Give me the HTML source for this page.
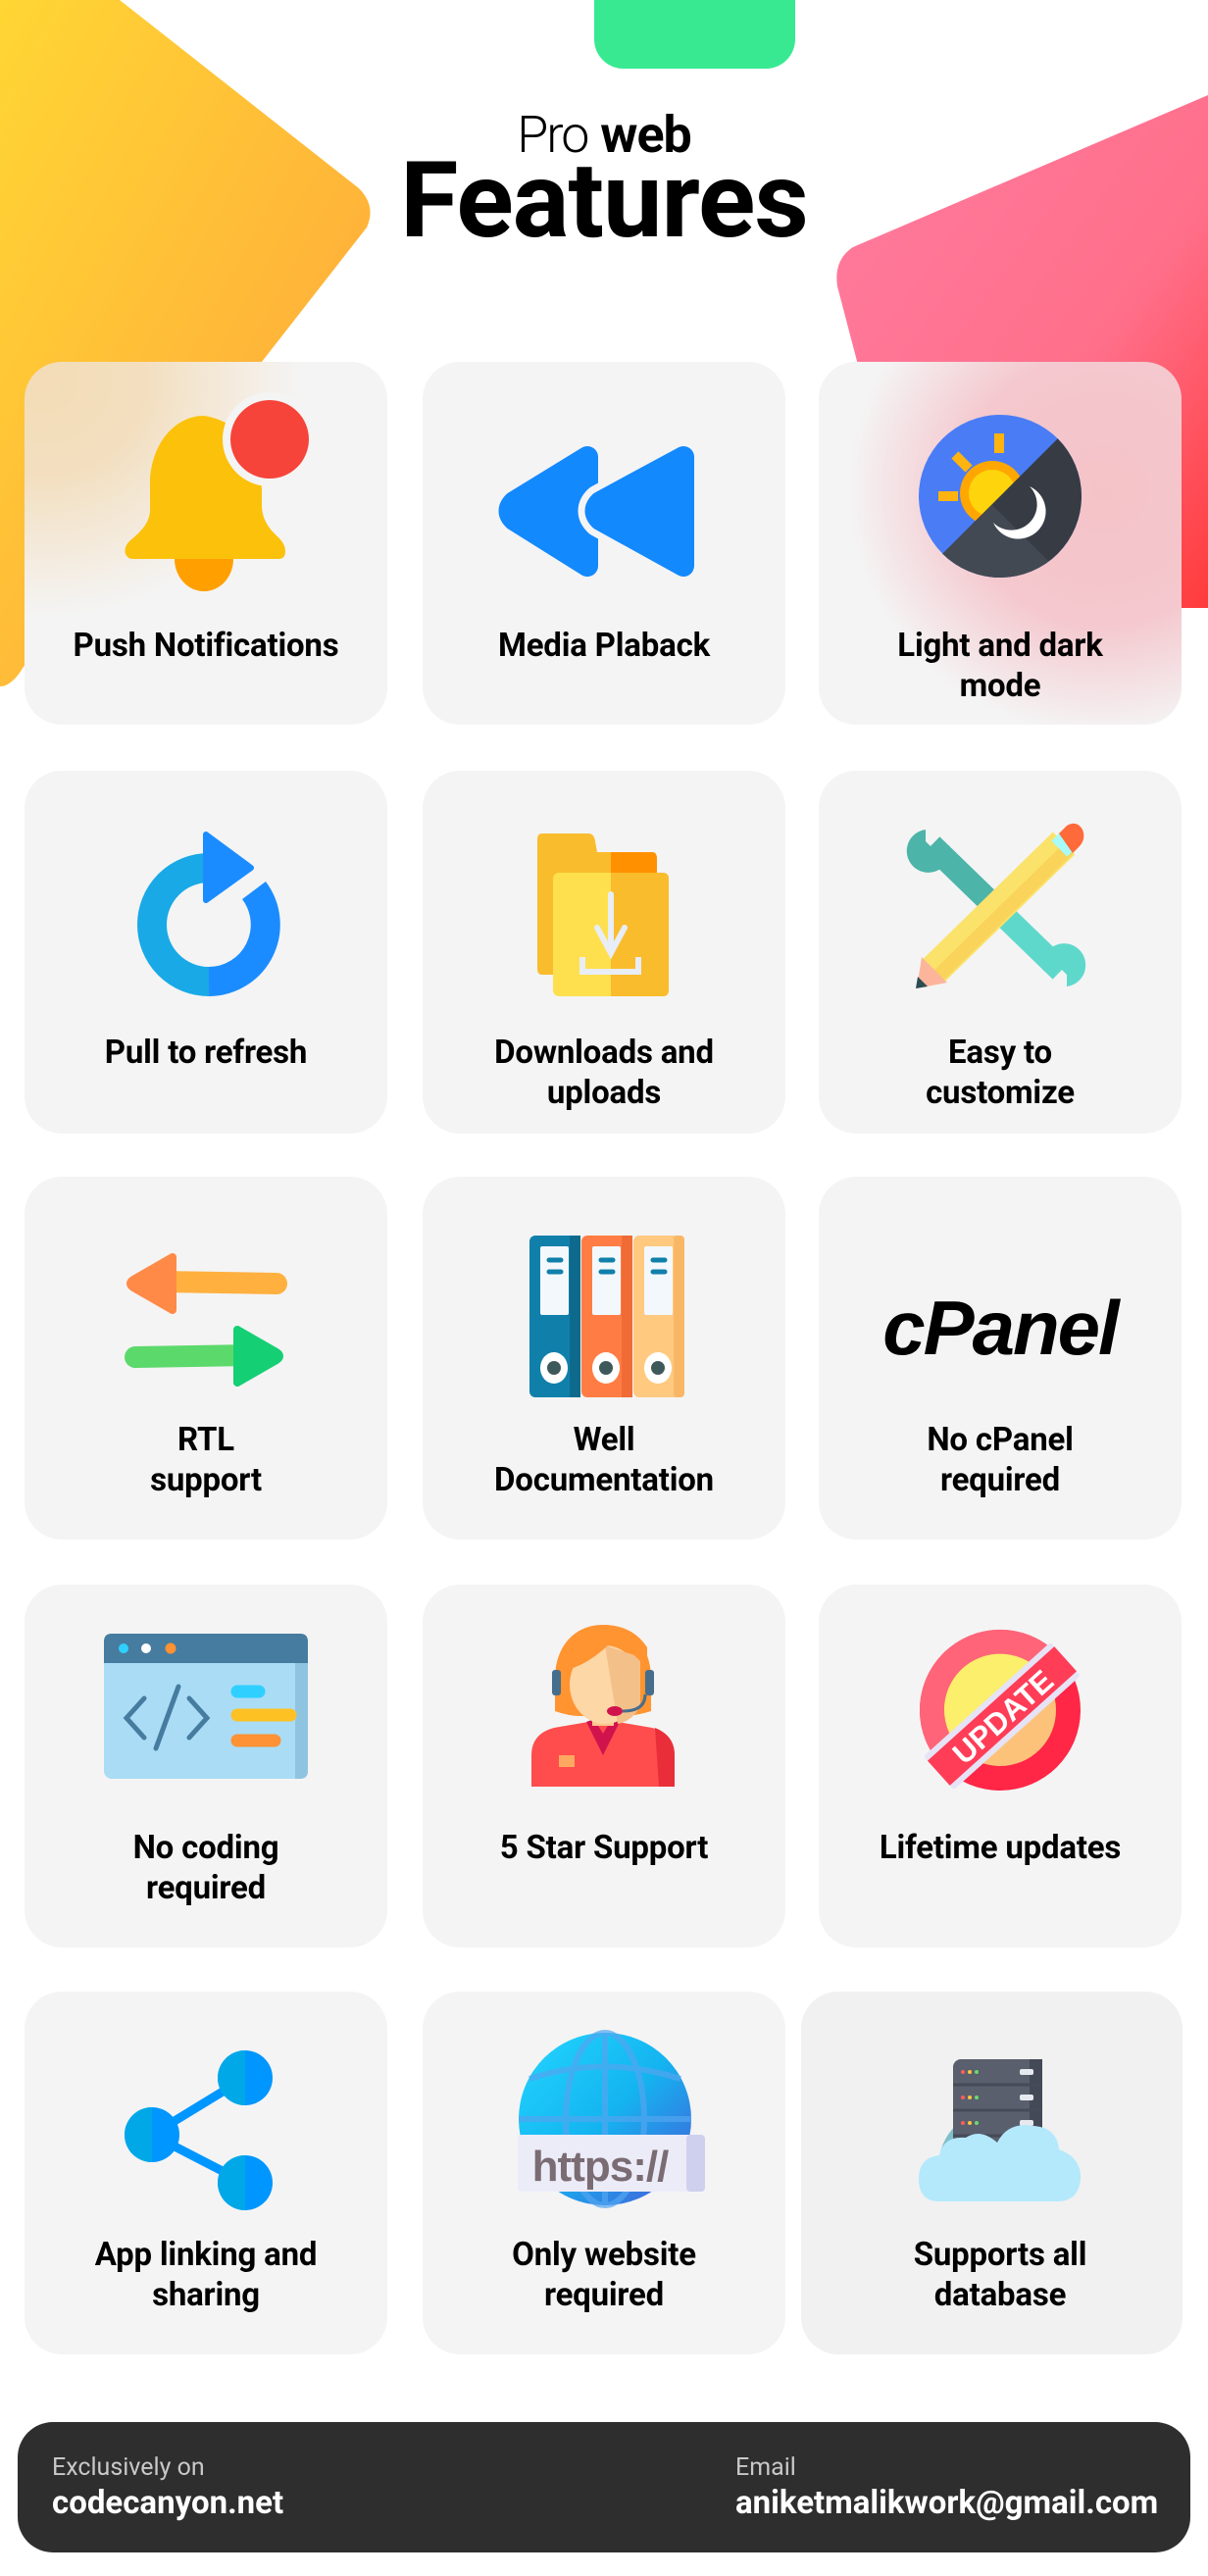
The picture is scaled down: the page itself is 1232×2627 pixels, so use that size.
<!DOCTYPE html>
<html><head><meta charset="utf-8">
<style>
html,body{margin:0;padding:0;}
body{width:1232px;height:2627px;position:relative;overflow:hidden;background:#fff;font-family:"Roboto","Liberation Sans",sans-serif;}
.abs{position:absolute;}
.card{position:absolute;width:370px;height:370px;border-radius:38px;background:#f4f4f4;}
.lbl{position:absolute;width:370px;text-align:center;font-weight:bold;font-size:33px;line-height:41px;color:#000;letter-spacing:-0.2px;}
svg{position:absolute;left:0;top:0;}
</style></head><body>
<svg width="1232" height="2627" viewBox="0 0 1232 2627">
<defs>
<linearGradient id="yg" x1="0" y1="0" x2="1" y2="1"><stop offset="0" stop-color="#ffd634"/><stop offset="1" stop-color="#ffa23c"/></linearGradient>
<linearGradient id="pg" x1="0" y1="0" x2="1" y2="1"><stop offset="0" stop-color="#ff7ca0"/><stop offset="0.6" stop-color="#ff6f8a"/><stop offset="1" stop-color="#ff3b3b"/></linearGradient>
</defs>
<path d="M0 0 L122 0 L366 192 Q384 210 374 232 L24 680 Q12 700 0 700 Z" fill="url(#yg)"/>
<path d="M1232 97 L870 252 Q850 265 854 292 L940 620 L1232 620 Z" fill="url(#pg)"/>
<rect x="606" y="-40" width="205" height="110" rx="30" fill="#38e991"/>
</svg>

<div class="abs" style="left:0;width:1232px;top:108px;text-align:center;font-size:52px;line-height:60px;color:#000;"><span style="font-weight:300;letter-spacing:-2px;">Pro</span> <span style="font-weight:bold;letter-spacing:-1px;">web</span></div>
<div class="abs" style="left:0;width:1232px;top:140px;text-align:center;font-size:108px;line-height:130px;font-weight:bold;color:#000;letter-spacing:-1px;">Features</div>

<!-- cards -->
<div class="card" style="left:25px;top:369px;background:radial-gradient(ellipse 260px 240px at 20px 20px,#f3dcb6 0%,#f3dfc0 40%,rgba(244,244,244,0) 100%),#f4f4f4;"></div>
<div class="card" style="left:431px;top:369px;"></div>
<div class="card" style="left:835px;top:369px;background:radial-gradient(ellipse 260px 250px at 290px 130px,#f4c3c8 0%,#f4c8ce 55%,rgba(244,244,244,0) 100%),#f4f4f4;"></div>

<div class="card" style="left:25px;top:786px;"></div>
<div class="card" style="left:431px;top:786px;"></div>
<div class="card" style="left:835px;top:786px;"></div>

<div class="card" style="left:25px;top:1200px;"></div>
<div class="card" style="left:431px;top:1200px;"></div>
<div class="card" style="left:835px;top:1200px;"></div>

<div class="card" style="left:25px;top:1616px;"></div>
<div class="card" style="left:431px;top:1616px;"></div>
<div class="card" style="left:835px;top:1616px;"></div>

<div class="card" style="left:25px;top:2031px;"></div>
<div class="card" style="left:431px;top:2031px;"></div>
<div class="card" style="left:817px;top:2031px;width:389px;background:#f1f1f1;"></div>

<!-- icons -->
<svg width="1232" height="2627" viewBox="0 0 1232 2627">
<defs>
<linearGradient id="gl" x1="0" y1="0" x2="1" y2="1"><stop offset="0" stop-color="#22d6ff"/><stop offset="0.5" stop-color="#14b4f0"/><stop offset="1" stop-color="#4a55d6"/></linearGradient>
<clipPath id="ldc"><circle cx="1020" cy="506" r="83"/></clipPath>
<clipPath id="upc"><circle cx="1020" cy="1744" r="82"/></clipPath>
</defs>
<!-- bell -->
<path d="M208 424 C180 424 155 450 153 490 L153 520 C153 535 140 545 132 552 Q126 558 128 565 Q130 570 136 570 L284 570 Q291 570 291 562 Q291 555 284 548 C275 540 267 530 267 515 L267 500 C267 470 250 430 208 424 Z" fill="#fcc10a"/>
<path d="M178 570 A30 33 0 0 0 238 570 Z" fill="#ffa000"/>
<circle cx="275" cy="448" r="48" fill="#f4f4f4"/>
<circle cx="275" cy="448" r="40" fill="#f6443a"/>
<!-- rewind -->
<path d="M599 466 L524 512 Q515 521 524 530 L599 577 Z" fill="#1389fe" stroke="#1389fe" stroke-width="22" stroke-linejoin="round"/>
<path d="M697 466 L612 512 Q603 521 612 530 L697 577 Z" fill="#f4f4f4" stroke="#f4f4f4" stroke-width="36" stroke-linejoin="round"/>
<path d="M697 466 L612 512 Q603 521 612 530 L697 577 Z" fill="#1389fe" stroke="#1389fe" stroke-width="22" stroke-linejoin="round"/>
<!-- light/dark -->
<g clip-path="url(#ldc)">
<rect x="930" y="420" width="180" height="180" fill="#4a7cf6"/>
<rect x="1014" y="442" width="10" height="20" fill="#ffb30f"/>
<rect x="957" y="501" width="20" height="10" fill="#ffb30f"/>
<rect x="976" y="461" width="10" height="20" fill="#ffb30f" transform="rotate(-45 981 471)"/>
<circle cx="1012" cy="503" r="33" fill="#ffa700"/>
<circle cx="1012" cy="503" r="24" fill="#fed40c"/>
<path d="M1081 445 L1110 445 L1110 620 L940 620 L959 567 Z" fill="#363b44"/><path d="M1012 515 L959 567 L940 620 L1110 620 L1066 569 Z" fill="#434953"/></g>
<path d="M1050 496 A28 28 0 1 1 1013 533 A24 24 0 0 0 1050 496 Z" fill="#fff"/>
<!-- refresh -->
<path d="M213 885 A58 58 0 0 0 213 1001" fill="none" stroke="#19a9e6" stroke-width="30"/>
<path d="M213 1001 A58 58 0 0 0 259 908" fill="none" stroke="#1a8cff" stroke-width="30"/>
<path d="M210 851 L256 885 L210 918 Z" fill="#1a8cff" stroke="#1a8cff" stroke-width="6" stroke-linejoin="round"/>
<!-- folder -->
<path d="M553 850 L600 850 Q606 850 607 858 L609 869 L665 869 Q670 869 670 876 L670 990 Q670 994 665 994 L553 994 Q548 994 548 988 L548 856 Q548 850 553 850 Z" fill="#f9bc2c"/>
<path d="M623 869 L665 869 Q670 869 670 876 L670 890 L623 890 Z" fill="#ff9100"/>
<rect x="564" y="890" width="118" height="126" rx="6" fill="#fee04e"/>
<path d="M623 890 L676 890 Q682 890 682 896 L682 1010 Q682 1016 676 1016 L623 1016 Z" fill="#f9bc2c"/>
<path d="M623 912 L623 972 M609 946 L623 972 L637 946" stroke="#e8edf6" stroke-width="6" fill="none" stroke-linecap="round"/>
<path d="M594 976 L594 991 L651 991 L651 976" stroke="#e8edf6" stroke-width="6" fill="none"/>
<!-- tools -->
<path d="M950 862 L1082 990" stroke="#5fd8cc" stroke-width="24"/>
<path d="M950 862 L1016 926" stroke="#4db4a9" stroke-width="24"/>
<path d="M944 846 A22 22 0 1 0 968 862 L956 870 L944 858 Z" fill="#4db4a9"/>
<path d="M1088 1006 A22 22 0 1 0 1064 990 L1076 982 L1088 994 Z" fill="#5fd8cc"/>
<path d="M1085 860 L952 990" stroke="#fbe26a" stroke-width="32"/>
<path d="M1090 865 L957 995" stroke="#f9d35a" stroke-width="14"/>
<path d="M1078 852 L1094 868" stroke="#a9fbf7" stroke-width="16"/>
<path d="M1080 850 L1088 842 Q1098 836 1104 846 Q1108 856 1100 864 L1094 870 Z" fill="#ff6a3a"/>
<path d="M940 976 L966 1002 L935 1008 Z" fill="#fcb59b"/>
<path d="M936 996 L946 1006 L934 1008 Z" fill="#2d4b52"/>
<!-- RTL arrows -->
<path d="M165 1307 L282 1309" stroke="#ffb03f" stroke-width="22" stroke-linecap="round"/>
<path d="M176 1282 L136 1305 Q130 1309 136 1313 L176 1336 Z" fill="#ff8a48" stroke="#ff8a48" stroke-width="8" stroke-linejoin="round"/>
<path d="M138 1384 L258 1382" stroke="#5cd96b" stroke-width="22" stroke-linecap="round"/>
<path d="M242 1356 L282 1379 Q288 1383 282 1387 L242 1410 Z" fill="#15cf74" stroke="#15cf74" stroke-width="8" stroke-linejoin="round"/>
<!-- binders -->
<rect x="540" y="1260" width="52" height="165" rx="6" fill="#1080ab"/><rect x="581" y="1260" width="11" height="165" fill="#0d6a8d"/>
<rect x="593" y="1260" width="52" height="165" rx="6" fill="#ff7d44"/><rect x="634" y="1260" width="11" height="165" fill="#f06b35"/>
<rect x="646" y="1260" width="52" height="165" rx="6" fill="#ffc97f"/><rect x="687" y="1260" width="11" height="165" rx="4" fill="#f9b765"/>
<g fill="#f3f8fc"><rect x="551" y="1271" width="29" height="70" rx="2"/><rect x="604" y="1271" width="29" height="70" rx="2"/><rect x="657" y="1271" width="29" height="70" rx="2"/></g>
<g stroke="#1080ab" stroke-width="5" stroke-linecap="round"><path d="M560 1285h12M560 1297h12M613 1285h12M613 1297h12M666 1285h12M666 1297h12"/></g>
<g fill="#fff"><ellipse cx="565" cy="1395" rx="14" ry="16"/><ellipse cx="618" cy="1395" rx="14" ry="16"/><ellipse cx="671" cy="1395" rx="14" ry="16"/></g>
<g fill="#3e5959"><circle cx="565" cy="1395" r="7"/><circle cx="618" cy="1395" r="7"/><circle cx="671" cy="1395" r="7"/></g>
<!-- cPanel -->
<text x="1020" y="1381" text-anchor="middle" font-family="Liberation Sans, sans-serif" font-weight="bold" font-style="italic" font-size="78" letter-spacing="-2" fill="#000">cPanel</text>
<!-- code window -->
<rect x="106" y="1666" width="208" height="148" rx="8" fill="#aadcf5"/>
<path d="M301 1696 L314 1696 L314 1806 Q314 1814 306 1814 L301 1814 Z" fill="#8fc4e0"/>
<path d="M114 1666 L306 1666 Q314 1666 314 1674 L314 1696 L106 1696 L106 1674 Q106 1666 114 1666 Z" fill="#467c9f"/>
<circle cx="126" cy="1681" r="5" fill="#2fd0ff"/><circle cx="149" cy="1681" r="5" fill="#fff"/><circle cx="174" cy="1681" r="5.5" fill="#ff9234"/>
<path d="M147 1732 L129 1752 L147 1772 M193 1732 L211 1752 L193 1772 M182 1720 L159 1783" stroke="#467c9f" stroke-width="5" fill="none" stroke-linecap="round"/>
<path d="M242 1725h22" stroke="#2fd0ff" stroke-width="13" stroke-linecap="round"/>
<path d="M242 1749h54" stroke="#fdc124" stroke-width="13" stroke-linecap="round"/>
<path d="M242 1775h38" stroke="#ff9234" stroke-width="13" stroke-linecap="round"/>
<!-- support person -->
<path d="M542 1822 L542 1790 Q542 1768 565 1762 L600 1756 L630 1756 L665 1762 Q688 1768 688 1790 L688 1822 Z" fill="#ff4d4d"/>
<path d="M668 1762 Q688 1770 688 1790 L688 1822 L672 1822 Z" fill="#e92e3a"/>
<path d="M598 1756 L615 1790 L632 1756 L624 1753 L615 1768 L606 1753 Z" fill="#d0124d"/>
<rect x="570" y="1790" width="16" height="12" fill="#ffa860"/>
<rect x="604" y="1740" width="22" height="20" fill="#fcc58e"/>
<path d="M615 1657 C585 1657 566 1680 566 1712 L566 1745 Q580 1750 592 1750 L640 1750 Q655 1748 664 1745 L664 1712 C664 1680 645 1657 615 1657 Z" fill="#ff9431"/>
<ellipse cx="617" cy="1718" rx="36" ry="40" fill="#fdd7a6"/>
<path d="M617 1678 L653 1690 L653 1740 Q645 1755 630 1758 Z" fill="#f4c08a"/>
<path d="M570 1705 Q600 1700 628 1670 Q648 1690 660 1700 L660 1680 Q645 1657 615 1657 Q578 1660 568 1700 Z" fill="#ff9431"/>
<rect x="563" y="1703" width="9" height="26" rx="3" fill="#466e8c"/><rect x="658" y="1703" width="9" height="26" rx="3" fill="#466e8c"/>
<path d="M658 1728 Q658 1745 635 1745" stroke="#466e8c" stroke-width="3" fill="none"/>
<ellipse cx="627" cy="1745" rx="8" ry="5" fill="#d0124d"/>
<!-- update badge -->
<circle cx="1020" cy="1744" r="82" fill="#ff2646"/>
<path d="M938 1744 A82 82 0 0 1 1080 1688 L960 1800 A82 82 0 0 1 938 1744 Z" fill="#ff6479"/>
<circle cx="1020" cy="1744" r="57" fill="#fdc27a"/>
<path d="M963 1744 A57 57 0 0 1 1060 1703 L980 1783 A57 57 0 0 1 963 1744 Z" fill="#fbef6b"/>
<g transform="rotate(-42 1022 1750)">
<rect x="935" y="1727" width="174" height="46" rx="3" fill="#e5e3f5"/>
<rect x="935" y="1733" width="174" height="34" fill="#ff3d57"/>
<text x="1022" y="1762" text-anchor="middle" font-family="Liberation Sans, sans-serif" font-weight="bold" font-size="31" fill="#fff">UPDATE</text>
</g>
<!-- share -->
<path d="M250 2119 L155 2177 L250 2226" stroke="#0096ff" stroke-width="9" fill="none"/>
<g><circle cx="250" cy="2119" r="28" fill="#0096ff"/><path d="M250 2091 A28 28 0 0 0 250 2147 Z" fill="#00a8e8"/>
<circle cx="155" cy="2177" r="28" fill="#0096ff"/><path d="M155 2149 A28 28 0 0 0 155 2205 Z" fill="#00a8e8"/>
<circle cx="250" cy="2226" r="28" fill="#0096ff"/><path d="M250 2198 A28 28 0 0 0 250 2254 Z" fill="#00a8e8"/></g>
<!-- globe -->
<circle cx="617" cy="2161" r="88" fill="url(#gl)"/>
<g stroke="#52a6f0" stroke-width="6" fill="none" opacity="0.7"><ellipse cx="617" cy="2161" rx="40" ry="88"/><path d="M617 2073 L617 2249 M529 2161 L705 2161 M540 2120 Q617 2095 694 2120"/></g>
<rect x="528" y="2177" width="191" height="58" rx="4" fill="#ececf8"/>
<rect x="700" y="2177" width="19" height="58" rx="4" fill="#cfcfee"/>
<text x="612" y="2224" text-anchor="middle" font-family="Liberation Sans, sans-serif" font-weight="bold" font-size="44" fill="#7a6c73" letter-spacing="-1">https://</text>
<!-- server/cloud -->
<path d="M957 2210 A60 60 0 0 1 1077 2210 Z" fill="#7fbfcb"/>
<rect x="972" y="2100" width="91" height="110" rx="8" fill="#5a5f6e"/>
<rect x="1050" y="2100" width="13" height="110" fill="#444957"/>
<g stroke="#474b58" stroke-width="3"><path d="M972 2126h91M972 2152h91M972 2178h91"/></g>
<g fill="#e6e9ef"><rect x="1040" y="2110" width="14" height="6" rx="2"/><rect x="1040" y="2136" width="14" height="6" rx="2"/><rect x="1040" y="2162" width="14" height="6" rx="2"/></g>
<g><circle cx="982" cy="2113" r="2" fill="#ff5d5d"/><circle cx="989" cy="2113" r="2" fill="#ffc43b"/><circle cx="996" cy="2113" r="2" fill="#6bd96b"/>
<circle cx="982" cy="2139" r="2" fill="#ff5d5d"/><circle cx="989" cy="2139" r="2" fill="#ffc43b"/><circle cx="996" cy="2139" r="2" fill="#6bd96b"/>
<circle cx="982" cy="2165" r="2" fill="#ff5d5d"/><circle cx="989" cy="2165" r="2" fill="#ffc43b"/><circle cx="996" cy="2165" r="2" fill="#6bd96b"/></g>
<path d="M958 2245 Q937 2245 937 2222 Q937 2200 958 2198 Q962 2178 985 2180 Q1000 2170 1017 2185 Q1028 2163 1055 2168 Q1078 2170 1080 2192 Q1103 2200 1102 2222 Q1100 2245 1078 2245 Z" fill="#b4e9fb"/>
</svg>

<!-- labels -->
<div class="lbl" style="left:25px;top:638px;">Push Notifications</div>
<div class="lbl" style="left:431px;top:638px;">Media Plaback</div>
<div class="lbl" style="left:835px;top:638px;">Light and dark<br>mode</div>

<div class="lbl" style="left:25px;top:1053px;">Pull to refresh</div>
<div class="lbl" style="left:431px;top:1053px;">Downloads and<br>uploads</div>
<div class="lbl" style="left:835px;top:1053px;">Easy to<br>customize</div>

<div class="lbl" style="left:25px;top:1448px;">RTL<br>support</div>
<div class="lbl" style="left:431px;top:1448px;">Well<br>Documentation</div>
<div class="lbl" style="left:835px;top:1448px;">No cPanel<br>required</div>

<div class="lbl" style="left:25px;top:1864px;">No coding<br>required</div>
<div class="lbl" style="left:431px;top:1864px;">5 Star Support</div>
<div class="lbl" style="left:835px;top:1864px;">Lifetime updates</div>

<div class="lbl" style="left:25px;top:2279px;">App linking and<br>sharing</div>
<div class="lbl" style="left:431px;top:2279px;">Only website<br>required</div>
<div class="lbl" style="left:835px;top:2279px;">Supports all<br>database</div>

<!-- footer -->
<div class="abs" style="left:18px;top:2470px;width:1196px;height:133px;border-radius:36px;background:#2e2e2e;"></div>
<div class="abs" style="left:53px;top:2502px;font-size:25px;line-height:30px;color:#c8c8c8;">Exclusively on</div>
<div class="abs" style="left:53px;top:2534px;font-size:33px;line-height:38px;color:#fff;font-weight:bold;">codecanyon.net</div>
<div class="abs" style="left:750px;top:2502px;font-size:25px;line-height:30px;color:#c8c8c8;">Email</div>
<div class="abs" style="left:750px;top:2534px;font-size:33px;line-height:38px;color:#fff;font-weight:bold;">aniketmalikwork@gmail.com</div>
</body></html>
